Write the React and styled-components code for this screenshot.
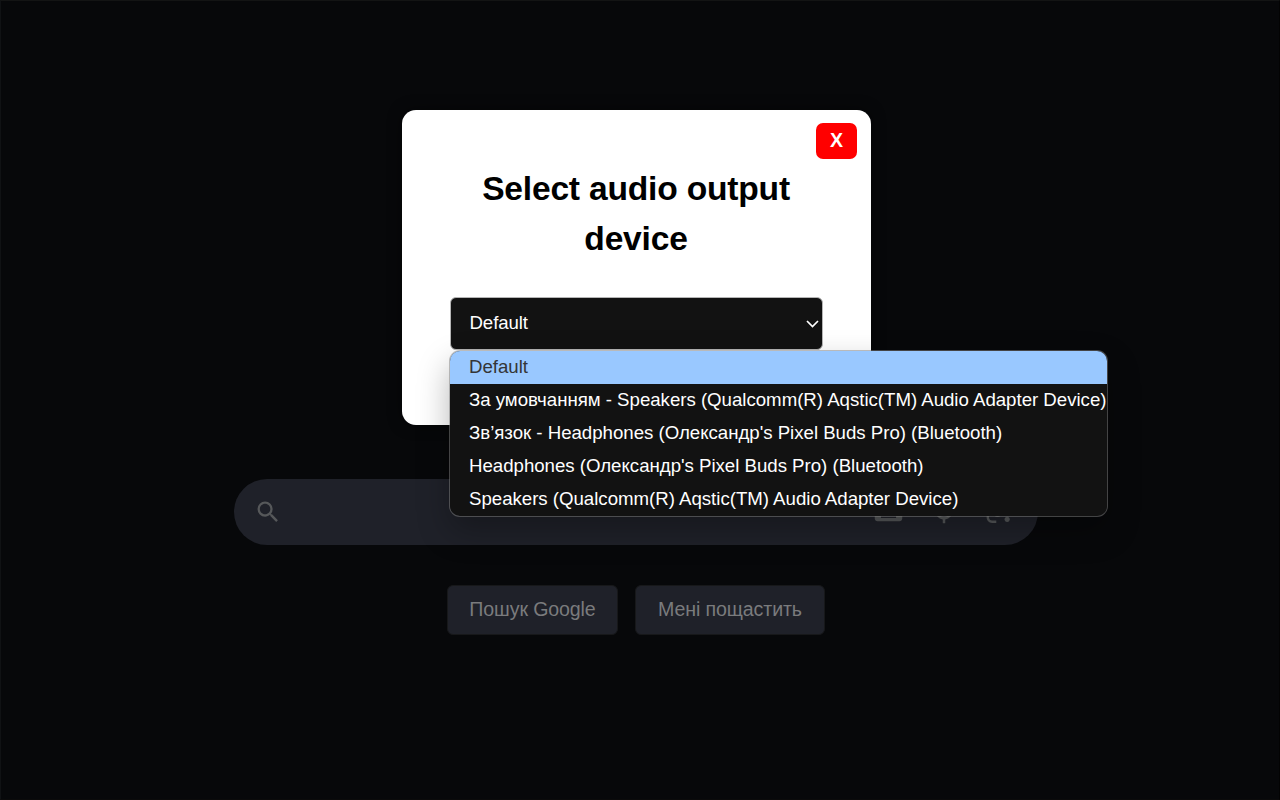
import React from 'react';
import styled, { createGlobalStyle } from 'styled-components';

const Global = createGlobalStyle`
  * { box-sizing: border-box; }
  body { margin: 0; background: #07080a; font-family: "Liberation Sans", Arial, sans-serif; }
`;

const Page = styled.div`
  position: relative;
  width: 1280px;
  height: 800px;
  padding-top: 479px;
  overflow: hidden;
  background: #07080a;
  border: 1px solid #101214;
  border-right-color: #030303;
  border-bottom-color: #0b0b0b;
  border-top-color: #131414;
`;

const Search = styled.div`
  display: flex;
  align-items: center;
  width: 804px;
  height: 66px;
  margin: -1px 0 0 233px;
  padding: 0 26px 0 20px;
  border-radius: 33px;
  background: #1f2129;
  color: #56585a;
`;

const Tools = styled.div`
  display: flex;
  align-items: center;
  gap: 24px;
  margin-left: auto;
`;

const Icon = styled.svg`
  display: block;
  width: ${(p) => p.$size}px;
  height: ${(p) => p.$size}px;
  margin-bottom: ${(p) => p.$lift || 0}px;
  fill: currentColor;
`;

const Actions = styled.div`
  display: flex;
  gap: 17px;
  margin: 40px 0 0 446px;
`;

const SearchButton = styled.button`
  width: ${(p) => p.$width}px;
  height: 50px;
  padding: 0 0 1px;
  border: 1px solid #17181a;
  border-radius: 6px;
  background: #1f2129;
  color: #7a7b7d;
  font: 19.6px "Liberation Sans", Arial, sans-serif;
  letter-spacing: -0.12px;
  white-space: nowrap;
`;

const Dialog = styled.section`
  position: absolute;
  left: 401px;
  top: 108.5px;
  width: 468.5px;
  height: 315px;
  padding: 13.5px 13.5px 0 47.5px;
  border-radius: 14px;
  background: #fff;
  box-shadow: 0 0 14px rgba(0, 0, 0, 0.5);
`;

const Close = styled.button`
  display: block;
  width: 41px;
  height: 36px;
  margin: 0 0 0 auto;
  padding: 0 0 1px;
  border: 0;
  border-radius: 7px;
  background: #f00;
  color: #fff;
  font: bold 19.6px "Liberation Sans", Arial, sans-serif;
`;

const Title = styled.h2`
  width: 373px;
  margin: 5px 0 33px;
  color: #000;
  font-size: 33.6px;
  line-height: 50px;
  letter-spacing: -0.2px;
  text-align: center;
`;

const Field = styled.div`
  position: relative;
  width: 373.5px;
`;

const Select = styled.div`
  display: flex;
  align-items: center;
  justify-content: space-between;
  height: 53px;
  padding: 0 3.5px 1px 19px;
  border: 1px solid #b5b5b5;
  border-radius: 6px;
  background: #121212;
  color: #fff;
  font-size: 18.67px;
  letter-spacing: -0.1px;
`;

const Chevron = styled.svg`
  display: block;
  width: 13px;
  height: 8px;
  margin-top: 2px;
  fill: none;
  stroke: #fff;
  stroke-width: 1.7;
`;

const Menu = styled.ul`
  position: absolute;
  left: -0.5px;
  top: 53px;
  width: 659px;
  margin: 0;
  padding: 0;
  overflow: hidden;
  list-style: none;
  background: #121212;
  border: 1px solid rgba(130, 130, 130, 0.5);
  background-clip: padding-box;
  border-radius: 11px;
  box-shadow: 0 14px 32px rgba(0, 0, 0, 0.28);
`;

const Option = styled.li`
  height: 33px;
  padding-left: 19px;
  line-height: 32px;
  font-size: 18.67px;
  letter-spacing: -0.02px;
  white-space: nowrap;
  color: ${(p) => (p.$active ? '#343536' : '#fff')};
  background: ${(p) => (p.$active ? '#99c8ff' : 'transparent')};
`;

const options = [
  { label: 'Default', active: true },
  { label: 'За умовчанням - Speakers (Qualcomm(R) Aqstic(TM) Audio Adapter Device)' },
  { label: "Зв’язок - Headphones (Олександр's Pixel Buds Pro) (Bluetooth)" },
  { label: "Headphones (Олександр's Pixel Buds Pro) (Bluetooth)" },
  { label: 'Speakers (Qualcomm(R) Aqstic(TM) Audio Adapter Device)' },
];

export default function App() {
  return (
    <>
      <Global />
      <Page>
        <Search>
          <Icon $size={28} viewBox="0 0 24 24">
            <path d="M15.5 14h-.79l-.28-.27A6.47 6.47 0 0 0 16 9.5 6.5 6.5 0 1 0 9.5 16c1.61 0 3.09-.59 4.23-1.57l.27.28v.79l5 4.99L20.49 19l-4.99-5zm-6 0C7.01 14 5 11.99 5 9.5S7.01 5 9.5 5 14 7.01 14 9.5 11.99 14 9.5 14z" />
          </Icon>
          <Tools>
            <Icon $size={33} $lift={2} viewBox="0 0 24 24">
              <path d="M20 5H4c-1.1 0-2 .9-2 2v10c0 1.1.9 2 2 2h16c1.1 0 2-.9 2-2V7c0-1.1-.9-2-2-2zm-9 3h2v2h-2V8zm0 3h2v2h-2v-2zM8 8h2v2H8V8zm0 3h2v2H8v-2zm-1 2H5v-2h2v2zm0-3H5V8h2v2zm10.5 6.8h-11v-2h11v2zM16 13h-2v-2h2v2zm0-3h-2V8h2v2zm3 3h-2v-2h2v2zm0-3h-2V8h2v2z" />
            </Icon>
            <Icon $size={30} viewBox="0 0 24 24">
              <path d="M12 14c1.66 0 3-1.34 3-3V5a3 3 0 0 0-6 0v6c0 1.66 1.34 3 3 3zm5-3a5 5 0 0 1-10 0H5c0 3.53 2.61 6.43 6 6.92V21h2v-3.08c3.39-.49 6-3.39 6-6.92h-2z" />
            </Icon>
            <Icon $size={29} $lift={1} viewBox="0 0 192 192">
              <circle cx="96" cy="104.15" r="28" />
              <circle cx="160" cy="148" r="17" />
              <path d="M24 112h16v24c0 11 9 20 20 20h28v16H60c-19.9 0-36-16.1-36-36z" />
              <path d="M152 112h16V76c0-19.9-16.1-36-36-36l-12-20H72L60 40c-19.9 0-36 16.1-36 36v12h16V76c0-11 9-20 20-20h72c11 0 20 9 20 20z" />
            </Icon>
          </Tools>
        </Search>
        <Actions>
          <SearchButton $width={171}>Пошук Google</SearchButton>
          <SearchButton $width={190}>Мені пощастить</SearchButton>
        </Actions>
        <Dialog role="dialog">
          <Close>X</Close>
          <Title>Select audio output device</Title>
          <Field>
            <Select>
              Default
              <Chevron viewBox="0 0 13 8">
                <path d="M1 1l5.5 5.5L12 1" />
              </Chevron>
            </Select>
            <Menu>
              {options.map((o) => (
                <Option key={o.label} $active={o.active}>{o.label}</Option>
              ))}
            </Menu>
          </Field>
        </Dialog>
      </Page>
    </>
  );
}
